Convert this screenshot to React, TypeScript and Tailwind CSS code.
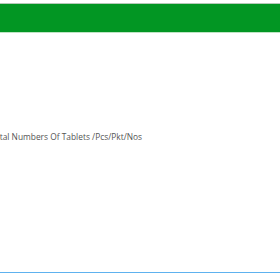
export default function App() {
  return (
    <div className="w-[280px] h-[280px] overflow-hidden bg-white flex flex-col font-['Open_Sans',sans-serif]">
      <div className="mt-[3px] h-[30px] border-t border-b border-t-[#b5c9b8] border-b-[#bfe3c4] bg-[#029623]" />
      <div className="mt-[98px] -ml-[10px] text-[8.4px] leading-[12px] text-[#555] whitespace-nowrap">
        Total Numbers Of Tablets /Pcs/Pkt/Nos
      </div>
      <div className="mt-auto mb-[7px] h-px bg-[#5eb2ef]" />
    </div>
  );
}
